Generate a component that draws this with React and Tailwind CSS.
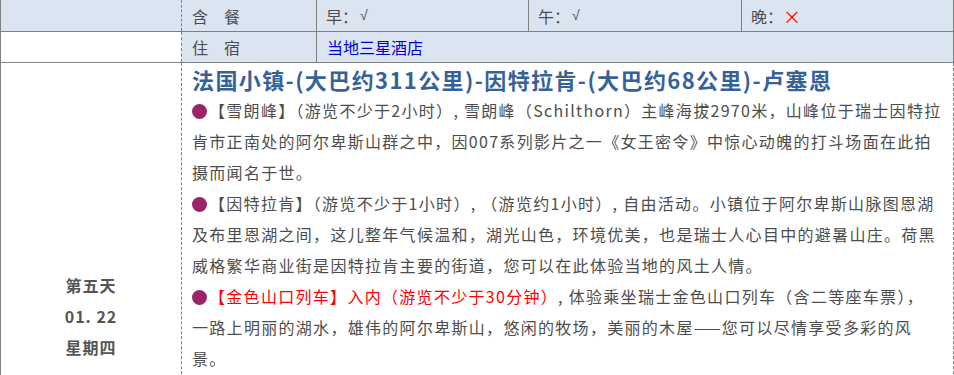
import React from 'react'

const FONT = "font-['Noto_Sans_CJK_SC','Noto_Sans',sans-serif]"

const Dot = () => (
  <span className="inline-block w-[15px] h-[15px] rounded-full bg-[#9b2468] align-[-2px] mr-[2px]" />
)

const Check = () => (
  <span className="font-['Liberation_Sans',sans-serif] text-[14px] ml-[2px]">√</span>
)

export default function App() {
  return (
    <div className={`w-[954px] bg-white text-[#4d4d4d] ${FONT}`}>
      {/* 含餐 */}
      <div className="flex h-[32px] border-b border-[#808080] bg-[#dbe5f1] text-[16px]">
        <div className="w-[181px] border-l border-[#808080]" />
        <div className="w-[135px] flex items-center pl-[10px] border-l border-dashed border-[#808080]">含　餐</div>
        <div className="w-[212px] flex items-center pl-[9px] border-l border-[#808080]">早：<Check /></div>
        <div className="w-[213px] flex items-center pl-[9px] border-l border-[#808080]">午：<Check /></div>
        <div className="w-[213px] flex items-center pl-[9px] border-x border-[#808080]">
          晚：<span className="text-[#ff0000] text-[18px] leading-none">×</span>
        </div>
      </div>

      {/* 住宿 */}
      <div className="flex h-[31px] border-b border-[#808080] text-[16px]">
        <div className="w-[181px] border-l border-[#808080] bg-white" />
        <div className="w-[135px] flex items-center pl-[10px] border-l border-dashed border-[#808080] bg-[#dbe5f1]">住　宿</div>
        <div className="flex-1 flex items-center pl-[10px] border-x border-[#808080] bg-[#dbe5f1] text-[#0000cc]">当地三星酒店</div>
      </div>

      {/* 第五天 */}
      <div className="flex">
        <div className="w-[181px] border-l border-[#808080] pt-[207px] flex flex-col items-center text-[16px] font-bold leading-[31px] tracking-[1px] text-[#555]">
          <div>第五天</div>
          <div>01.&nbsp;22</div>
          <div>星期四</div>
        </div>
        <div className="flex-1 border-l border-dashed border-[#808080] border-r border-r-[#808080] pl-[10px] pr-[10px] pb-[20px]">
          <h2 className="text-[22px] font-bold leading-[32px] tracking-[1.4px] text-[#36629a]">
            法国小镇-(大巴约311公里)-因特拉肯-(大巴约68公里)-卢塞恩
          </h2>
          <div className="text-[16px] leading-[31px] tracking-[1.3px]">
            <p>
              <Dot />【雪朗峰】（游览不少于2小时）, 雪朗峰（Schilthorn）主峰海拔2970米，山峰位于瑞士因特拉肯市正南处的阿尔卑斯山群之中，因007系列影片之一《女王密令》中惊心动魄的打斗场面在此拍摄而闻名于世。
            </p>
            <p>
              <Dot />【因特拉肯】（游览不少于1小时）, （游览约1小时）, 自由活动。小镇位于阿尔卑斯山脉图恩湖及布里恩湖之间，这儿整年气候温和，湖光山色，环境优美，也是瑞士人心目中的避暑山庄。荷黑威格繁华商业街是因特拉肯主要的街道，您可以在此体验当地的风土人情。
            </p>
            <p>
              <Dot />
              <span className="text-[#ff0000]">【金色山口列车】入内（游览不少于30分钟）</span>, 体验乘坐瑞士金色山口列车（含二等座车票），
              <br />
              一路上明丽的湖水，雄伟的阿尔卑斯山，悠闲的牧场，美丽的木屋——您可以尽情享受多彩的风景。
            </p>
          </div>
        </div>
      </div>
    </div>
  )
}
